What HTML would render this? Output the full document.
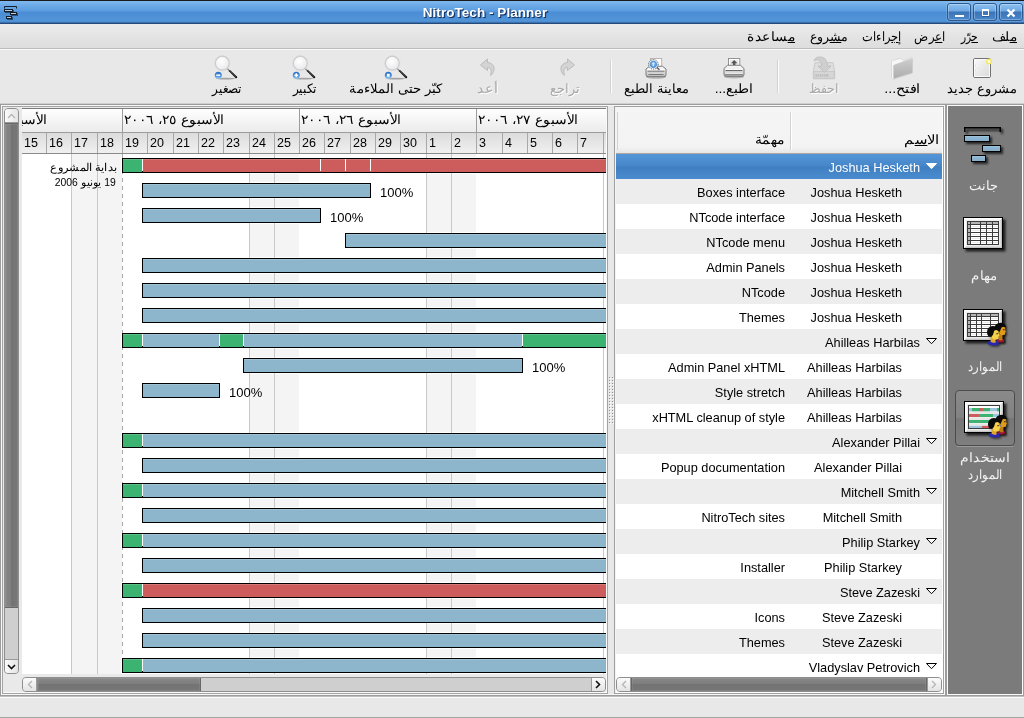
<!DOCTYPE html>
<html lang="ar">
<head>
<meta charset="utf-8">
<title>NitroTech - Planner</title>
<style>
*{box-sizing:border-box;margin:0;padding:0}
html,body{width:1024px;height:718px;overflow:hidden;background:#e8e8e8}
body{position:relative;will-change:transform;font-family:"Liberation Sans",sans-serif;font-size:12.75px;color:#000}
.abs{position:absolute}
/* title bar */
#title{position:absolute;left:0;top:0;width:1024px;height:24px;border-top:1px solid #1a1a1a;
 background:linear-gradient(#80b9ef 0px,#6aa8e6 5px,#5b9ce0 10px,#4a8dd4 11px,#5194d8 20px,#4a89cc 21px,#3b6fae 21px,#3b6fae 22px,#234a78 22px,#234a78 23px)}
#title .t{position:absolute;left:0;width:970px;top:4px;text-align:center;font-weight:bold;font-size:13.5px;color:#fff;
 text-shadow:1px 1px 0 #17386a,1px 1px 1px #17386a;letter-spacing:0.05px}
.wb{position:absolute;top:2px;width:24px;height:18px;border:1px solid #2a5890;border-radius:3px;
 background:linear-gradient(#8cc0f0 0,#6ea8e3 7px,#3c74b5 8px,#4a87cc 16px);box-shadow:inset 0 0 0 1px rgba(255,255,255,.28),0 0 0 1px rgba(255,255,255,.12)}
/* menubar */
#menu{position:absolute;left:0;top:24px;width:1024px;height:26px;background:linear-gradient(#ebebeb,#dedede 23px);
 border-bottom:1px solid #fafafa}
#menu:after{content:"";position:absolute;left:0;right:0;bottom:0;height:1px;background:#bcbcbc}
#menu span{position:absolute;top:5px;font-size:12px;white-space:nowrap;direction:rtl}
#menu u{text-decoration:underline}
/* toolbar */
#tb{position:absolute;left:0;top:50px;width:1024px;height:54px;background:#e8e8e8}
.lb{position:absolute;white-space:nowrap;direction:rtl;transform-origin:100% 50%;line-height:16px;height:16px}
.tl{position:absolute;top:31px;font-size:12px;white-space:nowrap;direction:rtl;text-align:center}
.tl.dis{color:#a8a8a8;text-shadow:1px 1px 0 #fff}
.sep{position:absolute;top:10px;width:2px;height:33px;border-left:1px solid #d2d2d2;border-right:1px solid #fdfdfd}
.ico{position:absolute}
/* main frames */
#main{position:absolute;left:0;top:103px;width:1024px;height:595px}
.row{position:absolute;left:0;width:326px;height:25px;line-height:28px;white-space:nowrap}
.row.odd{background:#ededed}
.row.sel{background:linear-gradient(#5396d8 0,#4686c9 12px,#3f7fc1 13px,#4a8cd0 25px);color:#fff}
.row span{position:absolute;top:0}
.gname{right:22px}
.cname{right:40px}
.task{right:157px}
.exp{right:4px;top:8px!important;width:13px;height:8px}
.exp svg{display:block}
/* gantt */
.wk{position:absolute;top:0;height:520px;background:#f4f4f4}
.vl{position:absolute;top:0;height:520px;width:1px;background:#c9c9c9}
.dash{position:absolute;top:0;height:520px;width:1px;background:repeating-linear-gradient(#aaa 0,#aaa 4px,transparent 4px,transparent 8px)}
.pstart{position:absolute;font-size:10.5px;line-height:16px;text-align:right;direction:rtl;white-space:nowrap}
.ol{position:absolute;height:17px;background:#fff}
.bar{position:absolute;height:15px;border:1px solid #000;background:#000}
.bar i{position:absolute;top:0;height:13px;box-shadow:inset 0 1px 0 rgba(255,255,255,.18)}
.bar b{position:absolute;top:0;height:12px;width:1px;background:#fff}
.pct{position:absolute;height:25px;line-height:28px;font-size:13px}
.wkh{position:absolute;top:0;height:23px;border-left:1px solid #9c9c9c;background:linear-gradient(#fff,#ebebeb);font-size:13px;line-height:22px;direction:rtl;text-align:left;white-space:nowrap;overflow:hidden}
.wkh span{position:absolute;left:1px;top:0;transform:scaleX(1.066);transform-origin:0 50%}
.dayh{position:absolute;top:24px;height:21px;border-left:1px solid #a8a8a8;background:linear-gradient(#dcdcdc,#f1f1f1);font-size:12.5px;line-height:21px;padding-left:2px;white-space:nowrap;overflow:hidden}
</style>
</head>
<body>
<!-- TITLE BAR -->
<div id="title">
 <div class="t">NitroTech - Planner</div>
 <div class="wb" style="left:947px"><div class="abs" style="left:7px;top:11px;width:9px;height:2px;background:#fff"></div></div>
 <div class="wb" style="left:973px"><div class="abs" style="left:8px;top:5px;width:7px;height:7px;border:1px solid #fff;border-top-width:2px;box-shadow:0 1px 0 rgba(30,60,110,.5)"></div></div>
 <div class="wb" style="left:999px"><svg class="abs" style="left:6px;top:4px" width="10" height="10" viewBox="0 0 10 10"><path d="M1.5 1.5L8.5 8.5M8.5 1.5L1.5 8.5" stroke="#fff" stroke-width="2.2"/></svg></div>
 <svg class="abs" style="left:3px;top:4px" width="18" height="17" viewBox="0 0 18 17"><g opacity=".45" transform="translate(1,1)"><rect x="1" y="4" width="9" height="3" /><rect x="7" y="7" width="7" height="3"/><rect x="3" y="11" width="6" height="3"/></g><path d="M1.500 3.500V1.500H13.500V3.500" fill="none" stroke="#15202c"/><rect x="1.500" y="4.500" width="8" height="2" fill="#b4c8d8" stroke="#15202c"/><rect x="7.500" y="7.500" width="6" height="2" fill="#b4c8d8" stroke="#15202c"/><rect x="3.500" y="11.500" width="5" height="2" fill="#b4c8d8" stroke="#15202c"/></svg>
</div>
<!-- MENU BAR -->
<div id="menu"></div>
<!-- TOOLBAR -->
<div id="tb">
 <div class="sep" style="left:777px"></div>
 <div class="sep" style="left:610px"></div>
  <!-- new -->
 <svg class="ico" style="left:971px;top:6px" width="24" height="24" viewBox="0 0 24 24">
  <defs><linearGradient id="gnew" x1="0" y1="0" x2="1" y2="1"><stop offset="0" stop-color="#fafafa"/><stop offset="1" stop-color="#d9d9d9"/></linearGradient></defs>
  <rect x="2.5" y="2.5" width="17" height="19" rx="1.500" fill="url(#gnew)" stroke="#707070"/>
  <rect x="3.5" y="3.5" width="15" height="17" fill="none" stroke="#fff" stroke-opacity=".8"/>
  <circle cx="5" cy="9.500" r=".8" fill="#fff"/><circle cx="5" cy="14.500" r=".8" fill="#fff"/><circle cx="4.700" cy="9.300" r=".45" fill="#aaa"/><circle cx="4.700" cy="14.300" r=".45" fill="#aaa"/>
  <circle cx="18" cy="5.400" r="2.300" fill="#fffbd8" stroke="#f3e75c" stroke-width="1.300"/>
 </svg>
 <!-- open -->
 <svg class="ico" style="left:889px;top:5px" width="26" height="26" viewBox="0 0 26 26">
  <defs><linearGradient id="gfo" x1="0" y1="0" x2="0" y2="1"><stop offset="0" stop-color="#cdcdcd"/><stop offset="1" stop-color="#adadad"/></linearGradient></defs>
  <path d="M2.500 6.500Q2.500 5.800 3.200 5.600L11 3.300Q11.800 3.100 12.500 3.800L14.800 5.500L22.500 2.400Q23.400 2.100 23.400 3V17.500Q23.400 18.200 22.700 18.400L4.300 24.300Q3.500 24.500 3 23.800L2.500 23Z" fill="#f6f6f6" stroke="#d4d4d4" stroke-width=".8"/>
  <path d="M4.600 11Q4.600 10.300 5.300 10L22.600 3.800Q23.300 3.600 23.300 4.300V17.300Q23.300 17.900 22.700 18.100L5.300 23.500Q4.600 23.700 4.600 23Z" fill="url(#gfo)" stroke="#c8c8c8" stroke-width=".7"/>
 </svg>
 <!-- save (disabled) -->
 <svg class="ico" style="left:811px;top:5px" width="26" height="26" viewBox="0 0 26 26">
  <path d="M4 7.700H22L23.700 16.500V23.200Q23.700 23.800 23.100 23.800H2.900Q2.300 23.800 2.300 23.200V16.500Z" fill="#dedede" stroke="#c6c6c6" stroke-width=".9"/>
  <path d="M2.800 16.500H23.200V23.300H2.800Z" fill="#d6d6d6" stroke="#c4c4c4" stroke-width=".8"/>
  <rect x="4.500" y="19.300" width="13" height="2.200" fill="#bcbcbc"/>
  <path d="M6.500 19.300V21.500M8.500 19.300V21.500M10.500 19.300V21.500M12.500 19.300V21.500M14.500 19.300V21.500" stroke="#d6d6d6" stroke-width=".7"/>
  <path d="M3 6C3.500 2.500 8 1 12 2.500C15 3.800 16.500 7 16.500 11H20L13.500 17.300L7 11H10.800C10.800 8 9.500 5.500 7 5C5.500 4.700 4 5.200 3 6Z" fill="#cfcfcf" stroke="#bcbcbc" stroke-width=".8" stroke-linejoin="round"/>
 </svg>
 <!-- print -->
 <svg class="ico" style="left:722px;top:7px" width="24" height="22" viewBox="0 0 24 22">
  <defs><linearGradient id="gpr" x1="0" y1="0" x2="0" y2="1"><stop offset="0" stop-color="#fbfbfb"/><stop offset=".55" stop-color="#e2e2e2"/><stop offset="1" stop-color="#b4b4b4"/></linearGradient></defs>
  <ellipse cx="12" cy="19.800" rx="10" ry="1.700" fill="#000" opacity=".22"/>
  <rect x="6.500" y="1.500" width="11.300" height="9" fill="#fff" stroke="#8a8a8a" stroke-width=".9"/>
  <rect x="8" y="3" width="8.300" height="5" fill="#e8e8e8"/>
  <path d="M12.200 3L9 6.200H11V8H13.400V6.200H15.400Z" fill="#555"/>
  <path d="M5.500 8.300H18.500L22 11.500V17.500Q22 19.300 20 19.300H4Q2 19.300 2 17.500V11.500Z" fill="url(#gpr)" stroke="#707070" stroke-width=".9"/>
  <path d="M3.500 12.300H20.500" stroke="#fff" stroke-width="1"/>
  <path d="M3.500 13.600H20.500" stroke="#5a5a5a" stroke-width="1"/>
  <path d="M3 16.300H21" stroke="#f4f4f4" stroke-width=".8"/>
  <path d="M3 17.700H21" stroke="#8e8e8e" stroke-width="1.400"/>
 </svg>
 <!-- print preview -->
 <svg class="ico" style="left:644px;top:7px" width="24" height="22" viewBox="0 0 24 22">
  <defs><radialGradient id="gpv" cx=".5" cy=".45" r=".6"><stop offset="0" stop-color="#b8d8f6"/><stop offset=".5" stop-color="#5f9fdc"/><stop offset="1" stop-color="#4a8ad0"/></radialGradient></defs>
  <ellipse cx="12" cy="20" rx="10" ry="1.700" fill="#000" opacity=".22"/>
  <rect x="6.500" y="1.500" width="11.200" height="9" fill="#fff" stroke="#b0b0b0" stroke-width=".9"/>
  <path d="M5.500 9.300H18.500L22 12V17.800Q22 19.700 20 19.700H4Q2 19.700 2 17.800V12Z" fill="url(#gpr)" stroke="#707070" stroke-width=".9"/>
  <path d="M3.500 12.700H20.500" stroke="#fff" stroke-width="1.200"/>
  <path d="M3.500 14.200H20.500" stroke="#707070" stroke-width="1"/>
  <path d="M3.500 15.500H20.500" stroke="#d0d0d0" stroke-width="1"/>
  <path d="M4.500 17.500H19.500" stroke="#7a7a7a" stroke-width="1"/>
  <path d="M12.200 10.200L15 12.300" stroke="#666" stroke-width="1.600" stroke-linecap="round"/>
  <circle cx="9.400" cy="7.400" r="4.600" fill="#f4f8fc"/><path d="M9.400 3.600Q12.600 4.200 13.200 7.400Q12.600 10.600 9.400 11.200Q6.200 10.600 5.600 7.400Q6.200 4.200 9.400 3.600Z" fill="url(#gpv)"/>
  <circle cx="9.400" cy="7.400" r="4.800" fill="none" stroke="#4a4a4a" stroke-width=".9" stroke-dasharray="1.200 1"/>
  <path d="M9.400 5L7.800 7H8.800V9.300H10V7H11Z" fill="#d8ecff" opacity=".9"/>
 </svg>
 <!-- redo-like arrow (disabled, 'تراجع') -->
 <svg class="ico" style="left:557px;top:7px" width="20" height="22" viewBox="0 0 20 22">
  <path d="M10.500 2L17.500 8L10.500 13.500V10.500C7.500 10.500 6 12.500 7.500 18.500C3 15.500 1.500 6.500 10.500 5.500Z" fill="#d4d4d4" stroke="#bcbcbc" stroke-width="1" stroke-linejoin="round"/>
 </svg>
 <!-- undo-like arrow (disabled, 'أعد') -->
 <svg class="ico" style="left:478px;top:7px" width="20" height="22" viewBox="0 0 20 22">
  <path d="M9.500 2L2.500 8L9.500 13.500V10.500C12.500 10.500 14 12.500 12.500 18.500C17 15.500 18.500 6.500 9.500 5.500Z" fill="#d4d4d4" stroke="#bcbcbc" stroke-width="1" stroke-linejoin="round"/>
 </svg>
 <!-- zoom -->
 <svg class="ico" style="left:0;top:0" width="0" height="0"><defs><radialGradient id="gmg" cx=".42" cy=".35" r=".75"><stop offset="0" stop-color="#ffffff"/><stop offset=".6" stop-color="#f0f0f2"/><stop offset="1" stop-color="#e4e4e6"/></radialGradient><linearGradient id="gbadge" x1="0" y1="0" x2="0" y2="1"><stop offset="0" stop-color="#2a6fc4"/><stop offset=".6" stop-color="#4a90dc"/><stop offset="1" stop-color="#9ad0f8"/></linearGradient></defs></svg>
 <svg class="ico" style="left:381px;top:3px" width="30" height="28" viewBox="0 0 30 28">
  <ellipse cx="14.500" cy="25.600" rx="10" ry="0.900" fill="#000" opacity=".3"/>
  <path d="M16 15.300L18.300 17.800" stroke="#8a8a8a" stroke-width="1.300" stroke-linecap="round"/>
  <path d="M17.700 17.900L19 16.900L26 23.400Q26.700 24.300 25.900 25Q25 25.700 24.200 24.800Z" fill="#161616"/>
  <path d="M19.300 18.300L25 23.700" stroke="#6a6a6a" stroke-width=".6"/>
  <circle cx="11.300" cy="10.200" r="7" fill="url(#gmg)" stroke="#c8c8c8" stroke-width="1.200"/>
  <circle cx="11.300" cy="10.200" r="7.700" fill="none" stroke="#dcdcdc" stroke-width=".6"/>
  <circle cx="7.300" cy="22.200" r="3.500" fill="url(#gbadge)"/>
  <rect x="5.900" y="20.800" width="2.800" height="2.900" fill="#fff"/>
 </svg>
 <svg class="ico" style="left:289px;top:3px" width="30" height="28" viewBox="0 0 30 28">
  <ellipse cx="14.500" cy="25.600" rx="10" ry="0.900" fill="#000" opacity=".3"/>
  <path d="M16 15.300L18.300 17.800" stroke="#8a8a8a" stroke-width="1.300" stroke-linecap="round"/>
  <path d="M17.700 17.900L19 16.900L26 23.400Q26.700 24.300 25.900 25Q25 25.700 24.200 24.800Z" fill="#161616"/>
  <path d="M19.300 18.300L25 23.700" stroke="#6a6a6a" stroke-width=".6"/>
  <circle cx="11.300" cy="10.200" r="7" fill="url(#gmg)" stroke="#c8c8c8" stroke-width="1.200"/>
  <circle cx="11.300" cy="10.200" r="7.700" fill="none" stroke="#dcdcdc" stroke-width=".6"/>
  <circle cx="7.300" cy="22.200" r="3.500" fill="url(#gbadge)"/>
  <path d="M7.300 20.300V24.100M5.400 22.200H9.200" stroke="#fff" stroke-width="1.500"/>
 </svg>
 <svg class="ico" style="left:211px;top:3px" width="30" height="28" viewBox="0 0 30 28">
  <ellipse cx="14.500" cy="25.600" rx="10" ry="0.900" fill="#000" opacity=".3"/>
  <path d="M16 15.300L18.300 17.800" stroke="#8a8a8a" stroke-width="1.300" stroke-linecap="round"/>
  <path d="M17.700 17.900L19 16.900L26 23.400Q26.700 24.300 25.900 25Q25 25.700 24.200 24.800Z" fill="#161616"/>
  <path d="M19.300 18.300L25 23.700" stroke="#6a6a6a" stroke-width=".6"/>
  <circle cx="11.300" cy="10.200" r="7" fill="url(#gmg)" stroke="#c8c8c8" stroke-width="1.200"/>
  <circle cx="11.300" cy="10.200" r="7.700" fill="none" stroke="#dcdcdc" stroke-width=".6"/>
  <circle cx="7.300" cy="22.200" r="3.500" fill="url(#gbadge)"/>
  <path d="M5.300 22.200H9.300" stroke="#fff" stroke-width="1.500"/>
 </svg>

</div>
<!-- MAIN -->
<div id="main">
 <!-- outer etched line -->
 <div class="abs" style="left:0;top:0;width:1024px;height:1px;background:#cfcfcf"></div>
 <div class="abs" style="left:0;top:1px;width:1024px;height:592px;border:1px solid #9c9c9c"></div>
 <div class="abs" style="left:0;top:593px;width:1024px;height:1px;background:#bdbdbd"></div>
 <div class="abs" style="left:0;top:594px;width:1024px;height:1px;background:#fbfbfb"></div>
 <div class="abs" style="left:1px;top:2px;width:1022px;height:590px;border:1px solid #f8f8f8"></div>
 <!-- gantt frame -->
 <div class="abs" style="left:2px;top:3px;width:606px;height:588px;border:1px solid #a4a4a4;background:#e9e9e9;box-shadow:inset -1px -1px 0 #fafafa"></div>
 <!-- v scrollbar -->
 <div class="abs" style="left:4px;top:5px;width:15px;height:566px;border:1px solid #8e8e8e;border-radius:4px;background:#cfcfcf;overflow:hidden">
   <div class="abs" style="left:0;top:0;width:13px;height:14px;background:linear-gradient(90deg,#fbfbfb,#e4e4e4);border-bottom:1px solid #9a9a9a"></div>
   <svg class="abs" style="left:2px;top:4px" width="9" height="6" viewBox="0 0 9 6"><path d="M1 5L4.5 1.5L8 5" fill="none" stroke="#b4b4b4" stroke-width="1.3"/></svg>
   <div class="abs" style="left:-1px;top:14px;width:15px;height:485px;background:linear-gradient(90deg,#888,#7e7e7e 47%,#737373 50%,#777);border:1px solid #686868;box-shadow:inset 0 0 0 1px rgba(255,255,255,.08)"></div>
   <div class="abs" style="left:0;top:550px;width:13px;height:14px;background:linear-gradient(90deg,#fbfbfb,#e4e4e4);border-top:1px solid #9a9a9a"></div>
   <svg class="abs" style="left:2px;top:555px" width="9" height="6" viewBox="0 0 9 6"><path d="M1 1L4.5 4.5L8 1" fill="none" stroke="#111" stroke-width="1.6"/></svg>
 </div>
 <!-- gantt header + canvas -->
 <div class="abs" style="left:22px;top:5px;width:584px;height:46px;background:#9c9c9c;overflow:hidden;border-top:1px solid #7c7c7c;border-bottom:1px solid #8a8a8a">
<div class="wkh" style="left:-77px;width:177px"><span>الأسبوع ٢٤، ٢٠٠٦</span></div>
<div class="wkh" style="left:100px;width:177px"><span>الأسبوع ٢٥، ٢٠٠٦</span></div>
<div class="wkh" style="left:277px;width:177px"><span>الأسبوع ٢٦، ٢٠٠٦</span></div>
<div class="wkh" style="left:454px;width:177px"><span>الأسبوع ٢٧، ٢٠٠٦</span></div>
<div class="dayh" style="left:-1px;width:25px">15</div>
<div class="dayh" style="left:24px;width:25px">16</div>
<div class="dayh" style="left:49px;width:26px">17</div>
<div class="dayh" style="left:75px;width:25px">18</div>
<div class="dayh" style="left:100px;width:25px">19</div>
<div class="dayh" style="left:125px;width:26px">20</div>
<div class="dayh" style="left:151px;width:25px">21</div>
<div class="dayh" style="left:176px;width:25px">22</div>
<div class="dayh" style="left:201px;width:26px">23</div>
<div class="dayh" style="left:227px;width:25px">24</div>
<div class="dayh" style="left:252px;width:25px">25</div>
<div class="dayh" style="left:277px;width:25px">26</div>
<div class="dayh" style="left:302px;width:26px">27</div>
<div class="dayh" style="left:328px;width:25px">28</div>
<div class="dayh" style="left:353px;width:25px">29</div>
<div class="dayh" style="left:378px;width:26px">30</div>
<div class="dayh" style="left:404px;width:25px">1</div>
<div class="dayh" style="left:429px;width:25px">2</div>
<div class="dayh" style="left:454px;width:26px">3</div>
<div class="dayh" style="left:480px;width:25px">4</div>
<div class="dayh" style="left:505px;width:25px">5</div>
<div class="dayh" style="left:530px;width:25px">6</div>
<div class="dayh" style="left:555px;width:26px">7</div>
<div class="dayh" style="left:581px;width:25px"></div>
 </div>
 <div class="abs" style="left:22px;top:51px;width:584px;height:520px;background:#fff;overflow:hidden">
<div class="wk" style="left:49px;width:51px"></div>
<div class="wk" style="left:227px;width:50px"></div>
<div class="wk" style="left:404px;width:50px"></div>
<div class="ol" style="left:99px;top:3px;width:521px"></div>
<div class="ol" style="left:119px;top:28px;width:231px"></div>
<div class="ol" style="left:119px;top:53px;width:181px"></div>
<div class="ol" style="left:322px;top:78px;width:298px"></div>
<div class="ol" style="left:119px;top:103px;width:501px"></div>
<div class="ol" style="left:119px;top:128px;width:501px"></div>
<div class="ol" style="left:119px;top:153px;width:501px"></div>
<div class="ol" style="left:99px;top:178px;width:521px"></div>
<div class="ol" style="left:220px;top:203px;width:282px"></div>
<div class="ol" style="left:119px;top:228px;width:80px"></div>
<div class="ol" style="left:99px;top:278px;width:521px"></div>
<div class="ol" style="left:119px;top:303px;width:501px"></div>
<div class="ol" style="left:99px;top:328px;width:521px"></div>
<div class="ol" style="left:119px;top:353px;width:501px"></div>
<div class="ol" style="left:99px;top:378px;width:521px"></div>
<div class="ol" style="left:119px;top:403px;width:501px"></div>
<div class="ol" style="left:99px;top:428px;width:521px"></div>
<div class="ol" style="left:119px;top:453px;width:501px"></div>
<div class="ol" style="left:119px;top:478px;width:501px"></div>
<div class="ol" style="left:99px;top:503px;width:521px"></div>
<div class="vl" style="left:49px"></div>
<div class="vl" style="left:75px"></div>
<div class="vl" style="left:227px"></div>
<div class="vl" style="left:252px"></div>
<div class="vl" style="left:404px"></div>
<div class="vl" style="left:429px"></div>
<div class="vl" style="left:581px"></div>
<div class="dash" style="left:100px"></div>
<div class="bar" style="left:100px;top:4px;width:519px">
<i style="left:0px;width:19px;background:#3cb371"></i>
<i style="left:20px;width:497px;background:#cd5c5c"></i>
<b style="left:19px"></b>
<b style="left:197px"></b>
<b style="left:222px"></b>
<b style="left:247px"></b>
</div>
<div class="bar" style="left:120px;top:29px;width:229px">
<i style="left:0px;width:227px;background:#8db6cd"></i>
</div>
<div class="pct" style="left:358px;top:25px">100%</div>
<div class="bar" style="left:120px;top:54px;width:179px">
<i style="left:0px;width:177px;background:#8db6cd"></i>
</div>
<div class="pct" style="left:308px;top:50px">100%</div>
<div class="bar" style="left:323px;top:79px;width:296px">
<i style="left:0px;width:294px;background:#8db6cd"></i>
</div>
<div class="bar" style="left:120px;top:104px;width:499px">
<i style="left:0px;width:497px;background:#8db6cd"></i>
</div>
<div class="bar" style="left:120px;top:129px;width:499px">
<i style="left:0px;width:497px;background:#8db6cd"></i>
</div>
<div class="bar" style="left:120px;top:154px;width:499px">
<i style="left:0px;width:497px;background:#8db6cd"></i>
</div>
<div class="bar" style="left:100px;top:179px;width:519px">
<i style="left:0px;width:19px;background:#3cb371"></i>
<i style="left:20px;width:76px;background:#8db6cd"></i>
<i style="left:97px;width:23px;background:#3cb371"></i>
<i style="left:121px;width:278px;background:#8db6cd"></i>
<i style="left:400px;width:117px;background:#3cb371"></i>
<b style="left:19px"></b>
<b style="left:96px"></b>
<b style="left:120px"></b>
<b style="left:399px"></b>
</div>
<div class="bar" style="left:221px;top:204px;width:280px">
<i style="left:0px;width:278px;background:#8db6cd"></i>
</div>
<div class="pct" style="left:510px;top:200px">100%</div>
<div class="bar" style="left:120px;top:229px;width:78px">
<i style="left:0px;width:76px;background:#8db6cd"></i>
</div>
<div class="pct" style="left:207px;top:225px">100%</div>
<div class="bar" style="left:100px;top:279px;width:519px">
<i style="left:0px;width:19px;background:#3cb371"></i>
<i style="left:20px;width:497px;background:#8db6cd"></i>
<b style="left:19px"></b>
</div>
<div class="bar" style="left:120px;top:304px;width:499px">
<i style="left:0px;width:497px;background:#8db6cd"></i>
</div>
<div class="bar" style="left:100px;top:329px;width:519px">
<i style="left:0px;width:19px;background:#3cb371"></i>
<i style="left:20px;width:497px;background:#8db6cd"></i>
<b style="left:19px"></b>
</div>
<div class="bar" style="left:120px;top:354px;width:499px">
<i style="left:0px;width:497px;background:#8db6cd"></i>
</div>
<div class="bar" style="left:100px;top:379px;width:519px">
<i style="left:0px;width:19px;background:#3cb371"></i>
<i style="left:20px;width:497px;background:#8db6cd"></i>
<b style="left:19px"></b>
</div>
<div class="bar" style="left:120px;top:404px;width:499px">
<i style="left:0px;width:497px;background:#8db6cd"></i>
</div>
<div class="bar" style="left:100px;top:429px;width:519px">
<i style="left:0px;width:19px;background:#3cb371"></i>
<i style="left:20px;width:497px;background:#cd5c5c"></i>
<b style="left:19px"></b>
</div>
<div class="bar" style="left:120px;top:454px;width:499px">
<i style="left:0px;width:497px;background:#8db6cd"></i>
</div>
<div class="bar" style="left:120px;top:479px;width:499px">
<i style="left:0px;width:497px;background:#8db6cd"></i>
</div>
<div class="bar" style="left:100px;top:504px;width:519px">
<i style="left:0px;width:19px;background:#3cb371"></i>
<i style="left:20px;width:497px;background:#8db6cd"></i>
<b style="left:19px"></b>
</div>
 </div>
 <!-- gantt h scrollbar -->
 <div class="abs" style="left:22px;top:574px;width:584px;height:15px;border:1px solid #8e8e8e;border-radius:4px;background:#cfcfcf;overflow:hidden">
   <div class="abs" style="left:0;top:0;width:14px;height:13px;background:linear-gradient(#fbfbfb,#e4e4e4);border-right:1px solid #9a9a9a"></div>
   <svg class="abs" style="left:4px;top:2px" width="6" height="9" viewBox="0 0 6 9"><path d="M5 1L1.5 4.5L5 8" fill="none" stroke="#b4b4b4" stroke-width="1.3"/></svg>
   <div class="abs" style="left:14px;top:-1px;width:164px;height:15px;background:linear-gradient(#888,#7e7e7e 47%,#737373 50%,#777);border:1px solid #686868;border-left-color:#8a8a8a;box-shadow:inset 0 0 0 1px rgba(255,255,255,.08)"></div>
   <div class="abs" style="right:0;top:0;width:14px;height:13px;background:linear-gradient(#fbfbfb,#e4e4e4);border-left:1px solid #9a9a9a"></div>
   <svg class="abs" style="right:4px;top:2px" width="6" height="9" viewBox="0 0 6 9"><path d="M1 1L4.5 4.5L1 8" fill="none" stroke="#111" stroke-width="1.6"/></svg>
 </div>
 <!-- pane handle dots -->
 <svg class="abs" style="left:609px;top:274px" width="5" height="48" viewBox="0 0 5 48" shape-rendering="crispEdges"><defs><pattern id="dots" width="3" height="3" patternUnits="userSpaceOnUse"><rect width="1" height="1" fill="#8e8e8e"/><rect x="1" y="1" width="1" height="1" fill="#fff"/></pattern></defs><rect width="5" height="48" fill="url(#dots)"/></svg>
 <!-- tree frame -->
 <div class="abs" style="left:614px;top:3px;width:330px;height:588px;border:1px solid #a0a0a0;background:#fff"></div>
 <div class="abs" style="left:944px;top:2px;width:1px;height:590px;background:#fafafa"></div>
 <div class="abs" style="left:945px;top:1px;width:2px;height:592px;background:#9c9c9c"></div>
 <div class="abs" style="left:616px;top:4px;width:326px;height:47px;background:linear-gradient(#f5f5f5,#f3f3f3 40px,#e6e6e6 46px);border-bottom:1px solid #b0a8a0">
   <div class="abs" style="left:174px;top:5px;width:1px;height:38px;background:#d2d2d2"></div>
   <div class="abs" style="left:175px;top:5px;width:1px;height:38px;background:#fff"></div>
   <div class="abs" style="left:1px;top:5px;width:1px;height:38px;background:#d2d2d2"></div>
 </div>
 <div class="abs" style="left:615px;top:4px;width:1px;height:586px;background:#f3f3f3"></div>
 <div class="abs" id="tree" style="left:616px;top:51px;width:326px;height:521px;overflow:hidden;background:#fff">
<div class="row sel" style="top:0px"><span class="exp"><svg width="13" height="8" viewBox="0 0 13 8"><path d="M1.5 1.500H11.500L6.500 6.700Z" fill="#fff" stroke="#fff" stroke-width="1" stroke-linejoin="miter"/></svg></span><span class="gname">Joshua Hesketh</span></div>
<div class="row odd" style="top:25px"><span class="cname">Joshua Hesketh</span><span class="task">Boxes interface</span></div>
<div class="row" style="top:50px"><span class="cname">Joshua Hesketh</span><span class="task">NTcode interface</span></div>
<div class="row odd" style="top:75px"><span class="cname">Joshua Hesketh</span><span class="task">NTcode menu</span></div>
<div class="row" style="top:100px"><span class="cname">Joshua Hesketh</span><span class="task">Admin Panels</span></div>
<div class="row odd" style="top:125px"><span class="cname">Joshua Hesketh</span><span class="task">NTcode</span></div>
<div class="row" style="top:150px"><span class="cname">Joshua Hesketh</span><span class="task">Themes</span></div>
<div class="row odd" style="top:175px"><span class="exp"><svg width="13" height="8" viewBox="0 0 13 8"><path d="M1.5 1.500H11.500L6.500 6.700Z" fill="#fff" stroke="#000" stroke-width="1" stroke-linejoin="miter"/></svg></span><span class="gname">Ahilleas Harbilas</span></div>
<div class="row" style="top:200px"><span class="cname">Ahilleas Harbilas</span><span class="task">Admin Panel xHTML</span></div>
<div class="row odd" style="top:225px"><span class="cname">Ahilleas Harbilas</span><span class="task">Style stretch</span></div>
<div class="row" style="top:250px"><span class="cname">Ahilleas Harbilas</span><span class="task">xHTML cleanup of style</span></div>
<div class="row odd" style="top:275px"><span class="exp"><svg width="13" height="8" viewBox="0 0 13 8"><path d="M1.5 1.500H11.500L6.500 6.700Z" fill="#fff" stroke="#000" stroke-width="1" stroke-linejoin="miter"/></svg></span><span class="gname">Alexander Pillai</span></div>
<div class="row" style="top:300px"><span class="cname">Alexander Pillai</span><span class="task">Popup documentation</span></div>
<div class="row odd" style="top:325px"><span class="exp"><svg width="13" height="8" viewBox="0 0 13 8"><path d="M1.5 1.500H11.500L6.500 6.700Z" fill="#fff" stroke="#000" stroke-width="1" stroke-linejoin="miter"/></svg></span><span class="gname">Mitchell Smith</span></div>
<div class="row" style="top:350px"><span class="cname">Mitchell Smith</span><span class="task">NitroTech sites</span></div>
<div class="row odd" style="top:375px"><span class="exp"><svg width="13" height="8" viewBox="0 0 13 8"><path d="M1.5 1.500H11.500L6.500 6.700Z" fill="#fff" stroke="#000" stroke-width="1" stroke-linejoin="miter"/></svg></span><span class="gname">Philip Starkey</span></div>
<div class="row" style="top:400px"><span class="cname">Philip Starkey</span><span class="task">Installer</span></div>
<div class="row odd" style="top:425px"><span class="exp"><svg width="13" height="8" viewBox="0 0 13 8"><path d="M1.5 1.500H11.500L6.500 6.700Z" fill="#fff" stroke="#000" stroke-width="1" stroke-linejoin="miter"/></svg></span><span class="gname">Steve Zazeski</span></div>
<div class="row" style="top:450px"><span class="cname">Steve Zazeski</span><span class="task">Icons</span></div>
<div class="row odd" style="top:475px"><span class="cname">Steve Zazeski</span><span class="task">Themes</span></div>
<div class="row" style="top:500px"><span class="exp"><svg width="13" height="8" viewBox="0 0 13 8"><path d="M1.5 1.500H11.500L6.500 6.700Z" fill="#fff" stroke="#000" stroke-width="1" stroke-linejoin="miter"/></svg></span><span class="gname">Vladyslav Petrovich</span></div>
 </div>
 <!-- tree h scrollbar -->
 <div class="abs" style="left:616px;top:574px;width:326px;height:15px;border:1px solid #8e8e8e;border-radius:4px;background:#cfcfcf;overflow:hidden">
   <div class="abs" style="left:0;top:0;width:14px;height:13px;background:linear-gradient(#fbfbfb,#e4e4e4);border-right:1px solid #9a9a9a"></div>
   <svg class="abs" style="left:4px;top:2px" width="6" height="9" viewBox="0 0 6 9"><path d="M5 1L1.5 4.5L5 8" fill="none" stroke="#b4b4b4" stroke-width="1.3"/></svg>
   <div class="abs" style="left:14px;top:-1px;width:296px;height:15px;background:linear-gradient(#888,#7e7e7e 47%,#737373 50%,#777);border:1px solid #686868;box-shadow:inset 0 0 0 1px rgba(255,255,255,.08)"></div>
   <div class="abs" style="right:0;top:0;width:14px;height:13px;background:linear-gradient(#fbfbfb,#e4e4e4);border-left:1px solid #9a9a9a"></div>
   <svg class="abs" style="right:4px;top:2px" width="6" height="9" viewBox="0 0 6 9"><path d="M1 1L4.5 4.5L1 8" fill="none" stroke="#b4b4b4" stroke-width="1.3"/></svg>
 </div>
 <!-- sidebar -->
  <div class="abs" style="left:947px;top:2px;width:76px;height:590px;border:1px solid #fafafa;background:#7b7b7b"></div>
 <div class="abs" id="side" style="left:948px;top:3px;width:74px;height:588px;overflow:hidden;background:#7b7b7b;color:#f2f2f2;font-size:12px;text-align:center">
      <svg class="abs" style="left:0;top:0" width="74" height="588" viewBox="0 0 74 588">
    <defs>
     <filter id="sh" x="-20%" y="-20%" width="150%" height="150%"><feGaussianBlur stdDeviation="1.1"/></filter>
     <filter id="shk" x="-20%" y="-20%" width="150%" height="150%"><feColorMatrix type="matrix" values="0 0 0 0 0  0 0 0 0 0  0 0 0 0 0  0 0 0 1 0"/><feGaussianBlur stdDeviation="0.9"/></filter>
     <linearGradient id="gbar" x1="0" y1="0" x2="0" y2="1"><stop offset="0" stop-color="#a8cbe2"/><stop offset=".35" stop-color="#8db6d2"/><stop offset="1" stop-color="#86aecb"/></linearGradient>
     <linearGradient id="gsel" x1="0" y1="0" x2="0" y2="1"><stop offset="0" stop-color="#8a8a8a"/><stop offset=".5" stop-color="#828282"/><stop offset=".5" stop-color="#767676"/><stop offset="1" stop-color="#7f7f7f"/></linearGradient>
     <g id="sheet">
      <rect x="2.500" y="2.500" width="40" height="32" fill="#000" opacity=".75" filter="url(#sh)"/>
      <rect x="0.500" y="0.500" width="39" height="31" fill="#ececec" stroke="#000"/>
      <path d="M1.500 30.500V1.500H38.500" fill="none" stroke="#fff"/>
      <path d="M2.500 29.500V2.500H37.500" fill="none" stroke="#fafafa"/>
      <path d="M38.500 2V30.500H2" fill="none" stroke="#c4c4c4"/>
      <path d="M37.500 3V29.500H3" fill="none" stroke="#dcdcdc"/>
     </g>
     <g id="ppl">
      <!-- back person -->
      <path d="M33 33.200Q33 30.300 36 30.200L40 29.800Q41.500 31 41 33Q37 34 33 33.200Z" fill="#9a1830"/>
      <path d="M35.800 26H39.500V31Q37 32 35.800 30.500Z" fill="#c07a10"/>
      <path d="M36.300 17.500Q40 16 42 18.500L42.300 21.500L43 23L42.200 23.400L42 25.500Q40 26.800 37.500 26Q35.500 23 36.300 17.500Z" fill="#e09a1c"/>
      <path d="M31.500 19Q32 14.200 37.500 13.800Q42.500 14 42.800 18.200Q40 17 38.500 18.500Q37.500 21 36.800 22.500Q35 24 32.500 23Q31.300 21 31.500 19Z" fill="#0a0a0a"/>
      <rect x="40.300" y="20" width="1.200" height="1.300" fill="#2a1a08"/>
      <!-- front person -->
      <path d="M24.500 35Q24.500 32 28 31.800L34 31.800Q36 33 35.800 35.500Q30 37.500 24.500 35Z" fill="#2828b4"/>
      <path d="M27.600 28.500H32.600V33.500Q29.500 34.500 27.600 32.500Z" fill="#e0a828"/>
      <path d="M28.500 21Q33 19.500 35.500 22L35.800 25L36.600 26.800L35.800 27.300L35.500 29.500Q33 31.200 30 30.300Q27.500 27 28.500 21Z" fill="#f8d048"/>
      <path d="M24 23Q24.300 17.500 30 17Q35.300 17.300 35.800 21.500Q33 20.300 31.200 21.800Q30.500 24.500 29.800 26.300Q28 28 25.300 27Q23.800 25 24 23Z" fill="#0a0a0a"/>
      <rect x="33.500" y="24" width="1.200" height="1.300" fill="#2a1a08"/>
     </g>
    </defs>
    <!-- gantt icon -->
    <g opacity=".7" filter="url(#sh)" transform="translate(2,2)">
     <path d="M17 26V22H52V26" fill="none" stroke="#000" stroke-width="2"/>
     <rect x="16" y="29" width="26" height="7"/><rect x="34" y="39" width="19" height="7"/><rect x="23" y="49" width="15" height="7"/>
    </g>
    <path d="M16.750 26V21.750H52.250V26" fill="none" stroke="#000" stroke-width="1.500"/>
    <rect x="16.500" y="29.500" width="25" height="6" fill="url(#gbar)" stroke="#000"/>
    <rect x="34.500" y="39.500" width="18" height="6" fill="url(#gbar)" stroke="#000"/>
    <rect x="23.500" y="49.500" width="14" height="6" fill="url(#gbar)" stroke="#000"/>
    <!-- tasks icon -->
    <g transform="translate(15,111)">
     <use href="#sheet"/>
     <rect x="4.500" y="4.500" width="31" height="23" fill="#fff" stroke="#3c3c3c"/>
     <rect x="5" y="5" width="30" height="2.500" fill="#b4b4b4"/><rect x="5" y="5" width="2.500" height="22" fill="#b4b4b4"/>
     <path d="M5 7.500H35M5 11.500H35M5 15.500H35M5 19.500H35M5 23.500H35M7.500 5V27M17.500 5V27M23.500 5V27M29.500 5V27" stroke="#3c3c3c" stroke-width="1" fill="none"/>
     <path d="M8.500 9.500H35M8.500 13.500H35M8.500 17.500H35M8.500 21.500H35M8.500 25.500H35" stroke="#e4e4e4" stroke-width=".8" fill="none"/>
     <path d="M7.500 8V27M17.500 8V27M23.500 8V27M29.500 8V27" stroke="#3c3c3c" stroke-width="1" fill="none"/>
    </g>
    <!-- resources icon -->
    <g transform="translate(15,203)">
     <use href="#sheet"/>
     <rect x="4.500" y="4.500" width="31" height="23" fill="#fff" stroke="#3c3c3c"/>
     <rect x="5" y="5" width="30" height="2.500" fill="#b4b4b4"/><rect x="5" y="5" width="2.500" height="22" fill="#b4b4b4"/>
     <path d="M5 7.500H35M5 11.500H35M5 15.500H35M5 19.500H35M5 23.500H35M7.500 5V27M13.500 5V27M18.500 5V27M27.500 5V27" stroke="#3c3c3c" stroke-width="1" fill="none"/>
     <path d="M8.500 9.500H35M8.500 13.500H35M8.500 17.500H35M8.500 21.500H35M8.500 25.500H35" stroke="#e4e4e4" stroke-width=".8" fill="none"/>
     <path d="M7.500 8V27M13.500 8V27M18.500 8V27M27.500 8V27" stroke="#3c3c3c" stroke-width="1" fill="none"/>
     <use href="#ppl" opacity=".55" filter="url(#shk)" transform="translate(1.500,1.500)"/>
     <use href="#ppl"/>
    </g>
    <!-- usage (selected) -->
    <rect x="7.500" y="284.500" width="59" height="55" rx="3.500" fill="url(#gsel)" stroke="#4c4c4c"/>
    <path d="M9 340.500H65" stroke="#9a9a9a" stroke-width="1"/>
    <g transform="translate(16,295)">
     <use href="#sheet"/>
     <rect x="4.500" y="4.500" width="31" height="23" fill="#f4f4f4" stroke="#3c3c3c"/>
     <rect x="5" y="5" width="30" height="2" fill="#fff"/><rect x="5" y="10.500" width="30" height="2.500" fill="#e6e6e6"/><rect x="5" y="16.500" width="30" height="2.500" fill="#e6e6e6"/><rect x="5" y="22.500" width="30" height="2" fill="#e6e6e6"/>
     <rect x="5" y="7" width="30" height="3.200" fill="#9cc4dc"/>
     <rect x="8" y="7" width="7" height="3.200" fill="#3cb371"/><rect x="15" y="7" width="4" height="3.200" fill="#cd5c5c"/><rect x="19" y="7" width="7" height="3.200" fill="#3cb371"/><rect x="33" y="7" width="2" height="3.200" fill="#3cb371"/>
     <rect x="5" y="13" width="10" height="3" fill="#cd5c5c"/><rect x="15" y="13" width="14" height="3" fill="#3cb371"/><rect x="29" y="13" width="6" height="3" fill="#9cc4dc"/>
     <rect x="5" y="19" width="30" height="3" fill="#3cb371"/>
     <rect x="5" y="24.800" width="13" height="2.200" fill="#9cc4dc"/><rect x="18" y="24.800" width="8" height="2.200" fill="#cd5c5c"/>
     <use href="#ppl" opacity=".55" filter="url(#shk)" transform="translate(1.500,1.500)"/>
     <use href="#ppl"/>
    </g>
   </svg>

 </div>
</div>
<div class="lb" id="m1" style="right:7.10px;top:29px;font-size:13px;transform:scaleX(1.0528);"><u>م</u>لف</div>
<div class="lb" id="m2" style="right:46.40px;top:29px;font-size:13px;transform:scaleX(0.8283);"><u>ح</u>رّر</div>
<div class="lb" id="m3" style="right:78.10px;top:29px;font-size:13px;transform:scaleX(0.9003);">ا<u>ع</u>رض</div>
<div class="lb" id="m4" style="right:122.50px;top:29px;font-size:13px;transform:scaleX(0.8821);">إ<u>ج</u>راءات</div>
<div class="lb" id="m5" style="right:176.50px;top:29px;font-size:13px;transform:scaleX(0.9604);">م<u>ش</u>روع</div>
<div class="lb" id="m6" style="right:229.50px;top:29px;font-size:13px;transform:scaleX(1.0629);"><u>م</u>ساعدة</div>
<div class="lb" id="t1" style="right:6.90px;top:81px;font-size:13px;transform:scaleX(1.0001);">مشروع جديد</div>
<div class="lb" id="t2" style="right:103.10px;top:81px;font-size:13px;transform:scaleX(1.1152);">افتح...</div>
<div class="lb" id="t3" style="right:185.30px;top:81px;font-size:13px;transform:scaleX(0.9711);color:#a8a8a8;text-shadow:1px 1px 0 #fff">احفظ</div>
<div class="lb" id="t4" style="right:271.60px;top:81px;font-size:13px;transform:scaleX(1.0651);">اطبع...</div>
<div class="lb" id="t5" style="right:335.75px;top:81px;font-size:13px;transform:scaleX(0.9899);">معاينة الطبع</div>
<div class="lb" id="t6" style="right:443.80px;top:81px;font-size:13px;transform:scaleX(0.9935);color:#a8a8a8;text-shadow:1px 1px 0 #fff">تراجع</div>
<div class="lb" id="t7" style="right:525.90px;top:81px;font-size:13px;transform:scaleX(1.0843);color:#a8a8a8;text-shadow:1px 1px 0 #fff">أعد</div>
<div class="lb" id="t8" style="right:581.80px;top:81px;font-size:13px;transform:scaleX(1.0176);">كبّر حتى الملاءمة</div>
<div class="lb" id="t9" style="right:706.60px;top:81px;font-size:13px;transform:scaleX(0.9359);">تكبير</div>
<div class="lb" id="t10" style="right:782.20px;top:81px;font-size:13px;transform:scaleX(0.9222);">تصغير</div>
<div class="lb" id="h1" style="right:84.20px;top:132px;font-size:13px;transform:scaleX(1.1504);">الا<u>س</u>م</div>
<div class="lb" id="h2" style="right:238.90px;top:132px;font-size:13px;transform:scaleX(1.0727);">مهمّة</div>
<div class="lb" id="s1" style="right:25.80px;top:178px;font-size:13px;transform:scaleX(0.9958);color:#f2f2f2">جانت</div>
<div class="lb" id="s2" style="right:27.00px;top:268px;font-size:13px;transform:scaleX(1.0258);color:#f2f2f2">مهام</div>
<div class="lb" id="s3" style="right:21.20px;top:359px;font-size:13px;transform:scaleX(0.9011);color:#f2f2f2">الموارد</div>
<div class="lb" id="s4" style="right:14.20px;top:450px;font-size:13px;transform:scaleX(1.0765);color:#f2f2f2">استخدام</div>
<div class="lb" id="s5" style="right:21.20px;top:467px;font-size:13px;transform:scaleX(0.9011);color:#f2f2f2">الموارد</div>
<div class="lb" id="p1" style="right:906.60px;top:159px;font-size:10.5px;transform:scaleX(1.0407);">بداية المشروع</div>
<div class="lb" id="p2" style="right:908.25px;top:174px;font-size:10.5px;transform:scaleX(0.9889);">19 يونيو 2006</div>
<!-- STATUS -->
<div class="abs" style="left:0;top:698px;width:1024px;height:20px;background:#e8e8e8;border-bottom:1px solid #a5a5a5"></div>
</body>
</html>
